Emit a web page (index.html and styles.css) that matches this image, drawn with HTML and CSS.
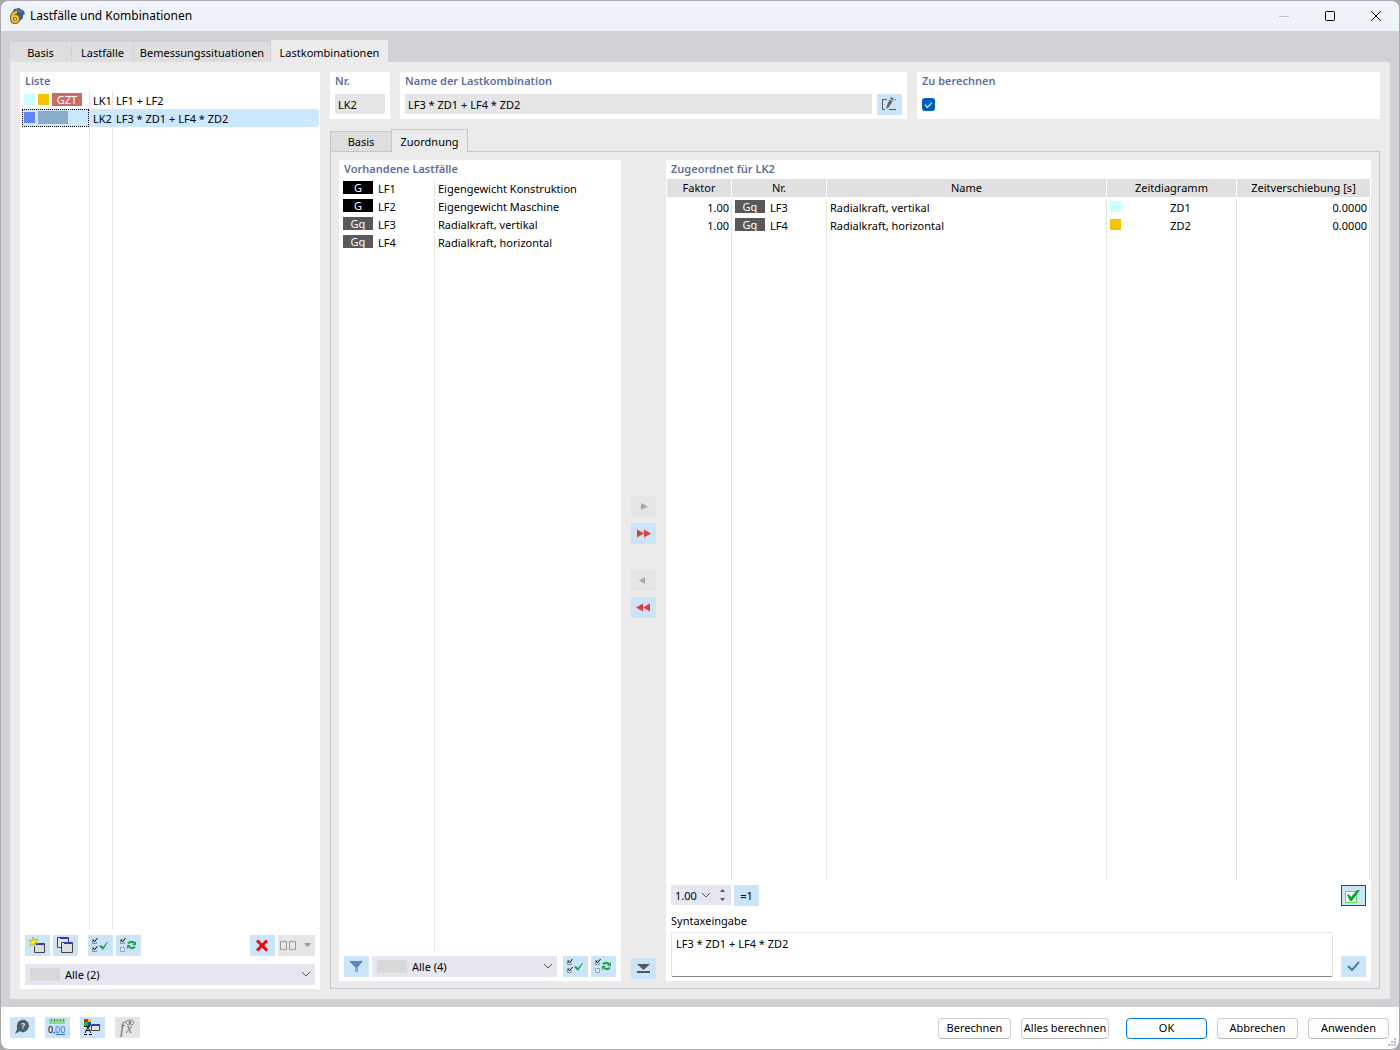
FILE: index.html
```html
<!DOCTYPE html>
<html lang="de">
<head>
    <meta charset="UTF-8">
    <meta name="viewport" content="width=device-width, initial-scale=1.0">
    <title>Lastfälle und Kombinationen</title>
    <link rel="stylesheet" href="styles.css">
</head>
<body>
    <!-- Shared icons -->
    <svg class="defs" aria-hidden="true">
        <symbol id="icon-check-all" viewBox="0 0 25 21">
            <path d="M7 4.500H4.500v4h4V7M7 12.500H4.500v4h4V15" fill="none" stroke="#8a929a"/>
            <path d="M5 5l1.500 2 3-4M5 13l1.500 2 3-4" fill="none" stroke="#111"/>
            <path d="M11 11l2-1 2 2 4-5h1l-5 8z" fill="#12a84a"/>
        </symbol>
        <symbol id="icon-check-invert" viewBox="0 0 25 21">
            <path d="M7 4.500H4.500v4h4V7" fill="none" stroke="#8a929a"/>
            <path d="M5 5l1.500 2 3-4" fill="none" stroke="#111"/>
            <path d="M4.500 12.500h4v4h-4z" fill="#dcecf8" stroke="#9aa7b3"/>
            <path d="M12 8.500q3-3 6-.5M19 11.500q-3 3-6 .5" fill="none" stroke="#21a24c" stroke-width="2"/>
            <path d="M20 6v4h-4zM11 14v-4h4z" fill="#21a24c"/>
        </symbol>
        <symbol id="icon-chevron" viewBox="0 0 10 6">
            <path d="M1 1l4 4 4-4" fill="none" stroke="#555"/>
        </symbol>
    </svg>

    <div class="window">
        <header class="titlebar">
            <svg class="app-icon" viewBox="0 0 16 16">
                <path d="M3 5l2-4 5-1 5 3 1 3-2 1v3l-3 3z" fill="#3f5f8d"/>
                <path d="M4 4l4-2 5 2" fill="none" stroke="#7d94b5"/>
                <path d="M8 4Q3 5 3 10q0 4 3 4t3-3q0-3-3-3-2 0-3 2" fill="none" stroke="#7a6520" stroke-width="4"/>
                <path d="M8 4Q3 5 3 10q0 4 3 4t3-3q0-3-3-3-2 0-3 2" fill="none" stroke="#f2c72e" stroke-width="2"/>
            </svg>
            <h1>Lastfälle und Kombinationen</h1>
            <div class="window-controls">
                <button type="button" aria-label="Minimieren" disabled><svg viewBox="0 0 12 12"><path d="M1 6.500h10" stroke="#c0c4c8"/></svg></button>
                <button type="button" aria-label="Maximieren"><svg viewBox="0 0 12 12"><rect x="1.500" y="1.500" width="9" height="9" rx="1" fill="none" stroke="#000"/></svg></button>
                <button type="button" aria-label="Schließen"><svg viewBox="0 0 12 12"><path d="M1 1l10 10M11 1L1 11" stroke="#111"/></svg></button>
            </div>
        </header>

        <main class="workspace">
            <nav class="tabs">
                <button type="button" class="tab tab-short">Basis</button>
                <button type="button" class="tab tab-short">Lastfälle</button>
                <button type="button" class="tab tab-long">Bemessungssituationen</button>
                <button type="button" class="tab active">Lastkombinationen</button>
            </nav>

            <div class="page">
                <section class="card list-card">
                    <h2>Liste</h2>
                    <div class="table-wrap list-wrap">
                        <table class="list-table">
                            <colgroup><col class="col-marks"><col class="col-id"><col></colgroup>
                            <tr>
                                <td><span class="marks"><i class="swatch cyan"></i><i class="swatch yellow"></i><span class="badge red">GZT</span></span></td>
                                <td>LK1</td>
                                <td>LF1 + LF2</td>
                            </tr>
                            <tr class="selected">
                                <td><span class="marks"><i class="swatch blue"></i><span class="badge steel"></span></span></td>
                                <td>LK2</td>
                                <td>LF3 * ZD1 + LF4 * ZD2</td>
                            </tr>
                            <tr class="filler"><td></td><td></td><td></td></tr>
                        </table>
                    </div>
                    <div class="toolbar list-tools">
                        <button type="button" class="tool" aria-label="Neu">
                            <svg viewBox="0 0 25 21">
                                <path d="M9.500 8.500h10v9h-10z" fill="#ddd" stroke="#444"/>
                                <path d="M11 8h8v2h-8z" fill="#3038c8"/>
                                <path d="M8 2l1 3 4-1-2 3 2 2-3-1v4L8 9l-3 2 1-3-2-3 3 1z" fill="#fff200" stroke="#8c8c3c" stroke-width=".5"/>
                            </svg>
                        </button>
                        <button type="button" class="tool" aria-label="Kopieren">
                            <svg viewBox="0 0 25 21">
                                <path d="M4.500 2.500h11v10h-11z" fill="#e6e6e6" stroke="#444"/>
                                <path d="M7 2h8v2H7z" fill="#3038c8"/>
                                <path d="M8.500 7.500h11v10h-11z" fill="#ddd" stroke="#444"/>
                                <path d="M11 7h8v2h-8z" fill="#3038c8"/>
                            </svg>
                        </button>
                        <button type="button" class="tool tool-apart" aria-label="Alle auswählen"><svg><use href="#icon-check-all"/></svg></button>
                        <button type="button" class="tool" aria-label="Auswahl umkehren"><svg><use href="#icon-check-invert"/></svg></button>
                        <span class="spacer"></span>
                        <button type="button" class="tool" aria-label="Löschen">
                            <svg viewBox="0 0 25 21"><path d="M7 5.500l10 10M17 5.500l-10 10" stroke="#f00" stroke-width="3"/></svg>
                        </button>
                        <button type="button" class="tool tool-wide" aria-label="Anordnen" disabled>
                            <svg viewBox="0 0 37 21">
                                <path d="M2.500 6.500h6v8h-6zM11.500 6.500h6v8h-6z" fill="none" stroke="#999"/>
                                <path d="M26 8h7l-3.500 4z" fill="#999"/>
                            </svg>
                        </button>
                    </div>
                    <div class="combo">
                        <i class="combo-swatch"></i>
                        <select aria-label="Filter der Liste"><option>Alle (2)</option></select>
                        <svg class="combo-arrow"><use href="#icon-chevron"/></svg>
                    </div>
                </section>

                <div class="details">
                    <div class="head-cards">
                        <section class="card nr-card">
                            <h2><label for="nr">Nr.</label></h2>
                            <input type="text" id="nr" value="LK2" readonly>
                        </section>
                        <section class="card name-card">
                            <h2><label for="name">Name der Lastkombination</label></h2>
                            <div class="name-row">
                                <input type="text" id="name" value="LF3 * ZD1 + LF4 * ZD2" readonly>
                                <button type="button" class="tool" aria-label="Name bearbeiten">
                                    <svg viewBox="0 0 25 21">
                                        <path d="M10 5.500H5.500v10H8M12 15.500h7M18 5.500h1" fill="none" stroke="#555"/>
                                        <path d="M9 15l1-4 4-8 3 2-5 8z" fill="#666"/>
                                        <path d="M13 5l3 2" stroke="#cce4f7"/>
                                    </svg>
                                </button>
                            </div>
                        </section>
                        <section class="card calc-card">
                            <h2><label for="calc">Zu berechnen</label></h2>
                            <input type="checkbox" id="calc" checked>
                        </section>
                    </div>

                    <nav class="subtabs">
                        <button type="button" class="subtab">Basis</button>
                        <button type="button" class="subtab active">Zuordnung</button>
                    </nav>

                    <div class="subpage">
                        <section class="card cases-card">
                            <h2>Vorhandene Lastfälle</h2>
                            <div class="table-wrap cases-wrap">
                                <table class="cases-table">
                                    <colgroup><col class="col-case"><col></colgroup>
                                    <tr><td><span class="case"><span class="badge black">G</span>LF1</span></td><td>Eigengewicht Konstruktion</td></tr>
                                    <tr><td><span class="case"><span class="badge black">G</span>LF2</span></td><td>Eigengewicht Maschine</td></tr>
                                    <tr><td><span class="case"><span class="badge gray">Gq</span>LF3</span></td><td>Radialkraft, vertikal</td></tr>
                                    <tr><td><span class="case"><span class="badge gray">Gq</span>LF4</span></td><td>Radialkraft, horizontal</td></tr>
                                    <tr class="filler"><td></td><td></td></tr>
                                </table>
                            </div>
                            <div class="toolbar cases-tools">
                                <button type="button" class="tool" aria-label="Filter">
                                    <svg viewBox="0 0 25 21"><path d="M5 5h14l-5 6v5h-3v-5z" fill="#5b84c4"/><path d="M11 11h3v5h-3z" fill="#7fa6e0"/></svg>
                                </button>
                                <div class="combo">
                                    <i class="combo-swatch"></i>
                                    <select aria-label="Filter der Lastfälle"><option>Alle (4)</option></select>
                                    <svg class="combo-arrow"><use href="#icon-chevron"/></svg>
                                </div>
                                <button type="button" class="tool" aria-label="Alle auswählen"><svg><use href="#icon-check-all"/></svg></button>
                                <button type="button" class="tool" aria-label="Auswahl umkehren"><svg><use href="#icon-check-invert"/></svg></button>
                            </div>
                        </section>

                        <div class="transfer">
                            <div class="transfer-group">
                                <button type="button" class="tool" aria-label="Hinzufügen" disabled><svg viewBox="0 0 25 21"><path d="M10 7l7 3.500-7 3.500z" fill="#a9a9a9"/></svg></button>
                                <button type="button" class="tool" aria-label="Alle hinzufügen"><svg viewBox="0 0 25 21"><path d="M6 6.500l7 4-7 4zM13 6.500l7 4-7 4z" fill="#e03c3c"/></svg></button>
                            </div>
                            <div class="transfer-group">
                                <button type="button" class="tool" aria-label="Entfernen" disabled><svg viewBox="0 0 25 21"><path d="M14 7l-6 3.500 6 3.500z" fill="#a9a9a9"/></svg></button>
                                <button type="button" class="tool" aria-label="Alle entfernen"><svg viewBox="0 0 25 21"><path d="M12 6.500l-7 4 7 4zM19 6.500l-7 4 7 4z" fill="#e03c3c"/></svg></button>
                            </div>
                            <button type="button" class="tool transfer-end" aria-label="Einklappen">
                                <svg viewBox="0 0 25 21"><path d="M6 6h13l-6.500 6zM6 13h13v2H6z" fill="#555"/></svg>
                            </button>
                        </div>

                        <section class="card assigned-card">
                            <h2>Zugeordnet für LK2</h2>
                            <div class="table-wrap assigned-wrap">
                                <table class="assigned-table">
                                    <colgroup><col class="col-factor"><col class="col-nr"><col><col class="col-diagram"><col class="col-shift"></colgroup>
                                    <tr><th>Faktor</th><th>Nr.</th><th>Name</th><th>Zeitdiagramm</th><th>Zeitverschiebung [s]</th></tr>
                                    <tr>
                                        <td class="num">1.00</td>
                                        <td><span class="case"><span class="badge gray">Gq</span>LF3</span></td>
                                        <td>Radialkraft, vertikal</td>
                                        <td><span class="diagram"><i class="swatch cyan"></i><span>ZD1</span></span></td>
                                        <td class="num">0.0000</td>
                                    </tr>
                                    <tr>
                                        <td class="num">1.00</td>
                                        <td><span class="case"><span class="badge gray">Gq</span>LF4</span></td>
                                        <td>Radialkraft, horizontal</td>
                                        <td><span class="diagram"><i class="swatch yellow"></i><span>ZD2</span></span></td>
                                        <td class="num">0.0000</td>
                                    </tr>
                                    <tr class="filler"><td></td><td></td><td></td><td></td><td></td></tr>
                                </table>
                            </div>
                            <div class="toolbar factor-tools">
                                <div class="spin">
                                    <input type="text" value="1.00" aria-label="Faktor">
                                    <svg class="spin-chevron"><use href="#icon-chevron"/></svg>
                                    <svg class="spin-arrows" viewBox="0 0 5 12"><path d="M0 3l2.500-3L5 3zM0 9h5l-2.500 3z" fill="#555"/></svg>
                                </div>
                                <button type="button" class="tool">=1</button>
                                <span class="spacer"></span>
                                <button type="button" class="tool pressed" aria-label="Syntax prüfen">
                                    <svg viewBox="0 0 25 21">
                                        <path d="M4.500 6.500h11v11h-11z" fill="#fff" stroke="#4ade4a"/>
                                        <path d="M6 10l2-1 2 3 6-7h3l-8 11H9z" fill="#0ea534"/>
                                    </svg>
                                </button>
                            </div>
                            <label class="syntax-label" for="syntax">Syntaxeingabe</label>
                            <div class="syntax">
                                <textarea id="syntax">LF3 * ZD1 + LF4 * ZD2</textarea>
                                <button type="button" class="tool" aria-label="Übernehmen">
                                    <svg viewBox="0 0 25 21"><path d="M7 10l4 4 7-8" fill="none" stroke="#4a7dbd" stroke-width="2"/></svg>
                                </button>
                            </div>
                        </section>
                    </div>
                </div>
            </div>
        </main>

        <footer class="footer">
            <button type="button" class="tool" aria-label="Hilfe">
                <svg viewBox="0 0 25 21">
                    <path d="M5 17l2-5q-1-4 1-7 3-3 7-2 4 2 4 6-1 5-5 6-3 1-4-1z" fill="#555e66"/>
                    <text x="11" y="12" font-size="9" font-weight="bold" fill="#cce4f7">?</text>
                </svg>
            </button>
            <button type="button" class="tool" aria-label="Einheiten">
                <svg viewBox="0 0 25 21">
                    <path d="M4 2h16v5H4z" fill="#8fd98a"/>
                    <path d="M6.500 2v2M9.500 2v2M12.500 2v2M15.500 2v2M18.500 2v2" stroke="#4f9a4f"/>
                    <text x="3" y="16" font-size="9" fill="#000">0,</text>
                    <text x="10" y="16" font-size="9" fill="#2f6fd6">00</text>
                    <path d="M11 17.500h9" stroke="#2f6fd6"/>
                </svg>
            </button>
            <button type="button" class="tool" aria-label="Anzeige">
                <svg viewBox="0 0 25 21">
                    <path d="M4 2h4v3H4z" fill="#e81c1c"/>
                    <path d="M8 2h3v3H8z" fill="#f0d000"/>
                    <path d="M4 5h4v4H4z" fill="#18c018"/>
                    <path d="M8 5h3v4H8z" fill="#2040d0"/>
                    <path d="M4 9.500h6M5 16l3-6 3 6M6 13.500h4M4 17.500h3M9 17.500h3" fill="none" stroke="#111"/>
                    <path d="M11.500 7.500h8v6h-8z" fill="#e4e4e4" stroke="#444"/>
                    <path d="M12 7h8v2h-8z" fill="#3038c8"/>
                </svg>
            </button>
            <button type="button" class="tool" aria-label="Formel" disabled>
                <svg viewBox="0 0 25 21">
                    <text x="5" y="16" class="formula" font-size="16" fill="#777">f</text>
                    <text x="11" y="16" class="formula" font-size="14" fill="#777">x</text>
                    <ellipse cx="15" cy="5.500" rx="4" ry="2.500" fill="#eee" stroke="#888"/>
                    <circle cx="15" cy="5.500" r="1.500" fill="#777"/>
                </svg>
            </button>
            <span class="spacer"></span>
            <button type="button" class="push push-small">Berechnen</button>
            <button type="button" class="push push-large">Alles berechnen</button>
            <button type="button" class="push push-ok">OK</button>
            <button type="button" class="push">Abbrechen</button>
            <button type="button" class="push">Anwenden</button>
            <svg class="grip" viewBox="0 0 8 8"><path d="M6 0h2v2H6zM3 3h2v2H3zM6 3h2v2H6zM0 6h2v2H0zM3 6h2v2H3zM6 6h2v2H6z" fill="#bbb"/></svg>
        </footer>
    </div>
</body>
</html>
```
FILE: styles.css
```css
/* Global Reset */
* {
    margin: 0;
    padding: 0;
    box-sizing: border-box;
}

body {
    font-family: "Noto Sans", "Open Sans", sans-serif;
    font-size: 11px;
    line-height: 16px;
    color: #000;
    background: #aaa9ad;
    height: 100vh;
    padding: 1px;
}

button,
input,
select,
textarea {
    font: inherit;
    color: inherit;
    border: none;
    border-radius: 0;
    outline: none;
}

svg {
    display: block;
}

.defs {
    position: absolute;
    width: 0;
    height: 0;
}

.window {
    display: flex;
    flex-direction: column;
    height: 100%;
    background: #fff;
    border-radius: 8px;
    overflow: hidden;
}

.spacer {
    flex: 1;
}

/* Title bar */
.titlebar {
    display: flex;
    align-items: center;
    height: 30px;
    padding-left: 8px;
    background: #eef3f9;
}

.app-icon {
    width: 16px;
    height: 16px;
    margin-right: 5px;
}

h1 {
    flex: 1;
    font-size: 12px;
    font-weight: 400;
}

.window-controls {
    display: flex;
}

.window-controls button {
    width: 46px;
    height: 30px;
    padding: 0 17px;
    background: none;
}

.window-controls svg {
    width: 12px;
    height: 12px;
}

/* Main tabs */
.workspace {
    flex: 1;
    display: flex;
    flex-direction: column;
    min-height: 0;
    padding: 9px 9px 8px;
    background: #d1d0d5;
}

.tabs {
    display: flex;
    align-items: flex-end;
    gap: 1px;
    height: 22px;
}

.tab {
    width: 117px;
    height: 20px;
    padding-top: 2px;
    background: #dedede;
    white-space: nowrap;
}

.tab-short {
    width: 61px;
}

.tab-long {
    width: 136px;
}

.tab.active {
    height: 22px;
    padding-top: 4px;
    background: #ebebeb;
}

.page {
    flex: 1;
    display: flex;
    gap: 10px;
    min-height: 0;
    padding: 10px;
    background: #ebebeb;
}

/* Cards */
.card {
    display: flex;
    flex-direction: column;
    background: #fff;
}

h2 {
    height: 19px;
    padding: 1px 5px;
    font-size: 11px;
    font-weight: 600;
    color: #60709a;
}

/* Tables */
.table-wrap {
    flex: 1;
    min-height: 0;
}

table {
    width: 100%;
    height: 100%;
    table-layout: fixed;
    border-collapse: separate;
    border-spacing: 0;
}

tr {
    height: 18px;
}

tr.filler {
    height: auto;
}

td {
    height: 18px;
    padding: 0 3px;
    border-left: 1px solid #e5e5e5;
    white-space: nowrap;
}

.filler td {
    height: auto;
}

td:first-child {
    border-left: none;
}

.badge {
    width: 30px;
    height: 13px;
    line-height: 13px;
    text-align: center;
    color: #fff;
    overflow: hidden;
}

.badge.red { background: #cd6b6b; }
.badge.steel { background: #8aabca; }
.badge.black { background: #000; }
.badge.gray { background: #595959; }

.swatch {
    width: 11px;
    height: 11px;
}

.swatch.cyan { background: #ccffff; }
.swatch.yellow { background: #f5c400; }
.swatch.blue { background: #6085f5; }

.marks,
.case,
.diagram {
    display: flex;
}

.marks {
    align-items: center;
    gap: 3px;
    padding-bottom: 2px;
}

.case {
    gap: 5px;
}

.diagram .swatch {
    margin-top: 1px;
}

.diagram span {
    flex: 1;
    padding-left: 7px;
    text-align: center;
}

.num {
    padding-right: 2px;
    text-align: right;
}

/* List of combinations */
.list-card {
    width: 300px;
}

.list-wrap {
    padding: 0 1px 0 2px;
}

.list-table td {
    padding-top: 2px;
}

.list-table td:first-child {
    padding: 0 2px;
}

.col-marks { width: 67px; }
.col-id { width: 23px; }

.selected td {
    background: #cce8ff;
    border-left-color: #cce8ff;
}

.list-table .selected td:first-child {
    padding: 0 1px;
    border: 1px dotted #000;
}

.selected td:last-child {
    border-radius: 0 3px 3px 0;
}

.toolbar {
    display: flex;
    gap: 3px;
}

.list-tools {
    padding: 5px 5px 8px;
}

.list-card .combo {
    flex: none;
    margin: 0 5px 4px;
}

.tool {
    flex: none;
    width: 25px;
    height: 21px;
    background: #cce4f7;
}

.tool svg {
    width: 100%;
    height: 21px;
}

.tool:disabled {
    background: #e5e5e5;
}

.tool-apart {
    margin-left: 7px;
}

.tool-wide {
    width: 37px;
}

.tool.pressed {
    box-shadow: inset 0 0 0 1px #005499;
}

/* Drop-downs */
.combo {
    position: relative;
    flex: 1;
    height: 21px;
}

.combo select {
    width: 100%;
    height: 21px;
    padding-left: 40px;
    appearance: none;
    background: #e6e6f1;
}

.combo-swatch {
    position: absolute;
    left: 5px;
    top: 4px;
    width: 30px;
    height: 13px;
    background: #d7d7d7;
}

.combo-arrow {
    position: absolute;
    right: 4px;
    top: 7px;
    width: 10px;
    height: 6px;
}

/* Header cards */
.details {
    flex: 1;
    display: flex;
    flex-direction: column;
    min-width: 0;
}

.head-cards {
    display: flex;
    gap: 10px;
    height: 47px;
    margin-bottom: 10px;
}

.nr-card {
    width: 60px;
}

.name-card {
    flex: 507;
}

.calc-card {
    flex: 463;
}

.head-cards h2 {
    height: 22px;
}

.head-cards input[type="text"] {
    height: 20px;
    padding: 0 3px;
    background: #e5e5e5;
}

.nr-card input {
    margin: 0 5px;
}

.name-row {
    display: flex;
    gap: 5px;
    padding: 0 5px;
}

.name-row input {
    flex: 1;
    min-width: 0;
}

input[type="checkbox"] {
    appearance: none;
    width: 13px;
    height: 13px;
    margin: 4px 5px;
    border-radius: 3px;
    background: #005fb8;
}

input[type="checkbox"]:checked::after {
    content: "";
    display: block;
    width: 6px;
    height: 3px;
    margin: 4px 3px;
    border: solid #fff;
    border-width: 0 0 1px 1px;
    transform: rotate(-45deg);
}

/* Inner tabs */
.subtabs {
    display: flex;
    align-items: flex-end;
    height: 23px;
    margin-bottom: -1px;
    z-index: 1;
}

.subtab {
    width: 61px;
    height: 21px;
    border: 1px solid #c5c5ce;
    border-right: none;
    background: #dedede;
}

.subtab.active {
    width: 77px;
    height: 23px;
    padding-top: 2px;
    border-right: 1px solid #c5c5ce;
    border-bottom: none;
    background: #ebebeb;
}

.subpage {
    flex: 1;
    display: flex;
    min-height: 0;
    padding: 8px 8px 7px;
    border: 1px solid #c5c5ce;
}

.cases-card {
    flex: none;
    width: 282px;
}

.cases-wrap {
    padding-top: 1px;
}

.cases-table td:first-child {
    padding-left: 4px;
}

.col-case { width: 95px; }

.cases-tools {
    padding: 5px 5px 4px;
}

.cases-tools .combo {
    margin-right: 3px;
}

.transfer {
    flex: none;
    display: flex;
    flex-direction: column;
    justify-content: flex-end;
    align-items: center;
    gap: 26px;
    width: 45px;
    padding-bottom: 2px;
}

.transfer-group {
    display: flex;
    flex-direction: column;
    gap: 6px;
}

.transfer-end {
    margin-top: 314px;
}

.assigned-card {
    flex: 1;
    min-width: 0;
}

.assigned-wrap {
    padding: 0 1px;
}

th {
    height: 20px;
    border-left: 1px solid #fff;
    border-bottom: 2px solid #fff;
    background: #e0e0e0;
    font-weight: 400;
}

th:first-child {
    border-left: none;
}

.assigned-table td:last-child {
    border-right: 1px solid #e5e5e5;
}

.col-factor { width: 64px; }
.col-nr { width: 95px; }
.col-diagram { width: 130px; }
.col-shift { width: 134px; }

.factor-tools {
    padding: 5px 5px 6px;
}

.spin {
    position: relative;
    width: 60px;
    height: 20px;
}

.spin input {
    width: 100%;
    height: 20px;
    padding-left: 4px;
    background: #e6e6f1;
}

.spin-chevron {
    position: absolute;
    left: 30px;
    top: 7px;
    width: 10px;
    height: 6px;
}

.spin-arrows {
    position: absolute;
    right: 6px;
    top: 4px;
    width: 5px;
    height: 12px;
}

.syntax-label {
    height: 20px;
    padding: 1px 5px;
}

.syntax {
    display: flex;
    align-items: flex-end;
    gap: 8px;
    padding: 0 5px 4px;
}

textarea {
    flex: 1;
    height: 45px;
    padding: 3px 4px;
    resize: none;
    border: 1px solid #e5e5e5;
    border-bottom-color: #868686;
    border-radius: 2px;
}

/* Footer */
.footer {
    position: relative;
    display: flex;
    align-items: center;
    gap: 10px;
    height: 42px;
    padding: 0 10px 0 9px;
}

.footer .tool {
    margin-bottom: 2px;
}

.push {
    width: 81px;
    height: 21px;
    background: #fdfdfd;
    border: 1px solid #ccc;
    border-bottom-color: #b8b8b8;
    border-radius: 4px;
    white-space: nowrap;
}

.push-small {
    width: 73px;
}

.push-large {
    width: 88px;
}

.push-ok {
    margin-left: 7px;
    border-color: #0078d4;
}

.formula {
    font-family: "Liberation Serif", serif;
    font-style: italic;
}

.grip {
    position: absolute;
    right: 3px;
    bottom: 3px;
    width: 8px;
    height: 8px;
}
```
